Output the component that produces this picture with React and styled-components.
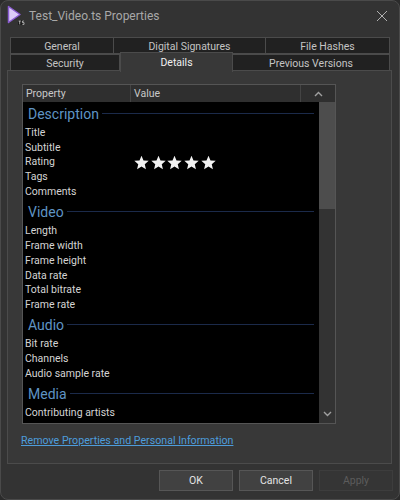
import React from 'react';
import styled, { createGlobalStyle } from 'styled-components';

const Global = createGlobalStyle`
  html, body {
    margin: 0;
    padding: 0;
    background: #2b2b2b;
  }
  * {
    box-sizing: border-box;
  }
`;

const Dialog = styled.div`
  width: 400px;
  height: 500px;
  background: #333333;
  border-radius: 8px;
  border: 1px solid #4a4a4a;
  display: flex;
  flex-direction: column;
  overflow: hidden;
  font-family: Roboto, "Noto Sans", sans-serif;
  color: #e6e6e6;
`;

const TitleBar = styled.div`
  height: 36px;
  flex: none;
  display: flex;
  align-items: center;
  padding: 0 11px 7px 6px;
`;

const Title = styled.div`
  flex: 1;
  margin-left: 4px;
  font-size: 12px;
  color: #a8a8a8;
`;

const Tabs = styled.div`
  margin: 0 9px;
  display: flex;
  flex-direction: column;
  flex: none;
`;

const TabRow = styled.div`
  display: flex;
  height: 17px;
  align-items: stretch;
`;

const Tab = styled.div`
  width: ${(p) => p.$width}px;
  display: flex;
  align-items: center;
  justify-content: center;
  padding-top: 1px;
  font-size: 10.5px;
  background: ${(p) => (p.$active ? '#383838' : '#212121')};
  color: ${(p) => (p.$active ? '#f0f0f0' : '#c4c4c4')};
  border: 1px solid #4b4b4b;
  border-left-width: ${(p) => (p.$first || p.$active ? 1 : 0)}px;
  ${(p) =>
    p.$active &&
    `
    margin-top: -2px;
    height: 20px;
    border-bottom: 0;
    padding-bottom: 1px;
    position: relative;
    z-index: 1;
  `}
`;

const Panel = styled.div`
  margin: -1px 7px 0 6px;
  height: 394px;
  flex: none;
  background: #383838;
  border: 1px solid #4b4b4b;
  padding: 13px 0 0 14px;
`;

const List = styled.div`
  width: 314px;
  height: 340px;
  border: 1px solid #555555;
  display: flex;
  flex-direction: column;
`;

const Header = styled.div`
  height: 17px;
  flex: none;
  display: flex;
  background: #2f2f2f;
  font-size: 10.5px;
  color: #c8c8c8;
`;

const HeaderCell = styled.div`
  width: ${(p) => p.$width}px;
  display: flex;
  align-items: center;
  justify-content: ${(p) => (p.$center ? 'center' : 'flex-start')};
  padding-left: ${(p) => (p.$center ? 0 : 3)}px;
  border-right: ${(p) => (p.$last ? 0 : 1)}px solid #444444;
`;

const ListBody = styled.div`
  flex: 1;
  min-height: 0;
  display: flex;
`;

const Rows = styled.div`
  width: 296px;
  background: #000000;
  overflow: hidden;
  padding: 2px 5px 0 2px;
`;

const SectionHead = styled.div`
  height: 21px;
  padding-bottom: 2px;
  display: flex;
  align-items: center;
  gap: 3px;
  margin-left: 3px;
  font-size: 14px;
  color: #5f94c4;
  &::after {
    content: '';
    flex: 1;
    height: 1px;
    background: #1b2a4a;
  }
`;

const Section = styled.div`
  padding-bottom: 3.3px;
`;

const Row = styled.div`
  height: 14.8px;
  display: flex;
  align-items: center;
  font-size: 10.5px;
  color: #d4d4d4;
`;

const RowName = styled.div`
  width: 109px;
`;

const Stars = styled.div`
  display: flex;
  gap: 1.7px;
`;

const ScrollBar = styled.div`
  width: 16px;
  background: #333333;
  display: flex;
  flex-direction: column;
`;

const Thumb = styled.div`
  height: 107px;
  background: #4d4d4d;
`;

const DownArrow = styled.div`
  margin-top: auto;
  height: 18px;
  display: flex;
  align-items: center;
  justify-content: center;
`;

const RemoveLink = styled.a`
  display: inline-block;
  margin-top: 10px;
  margin-left: -1px;
  font-size: 10.65px;
  color: #4d9ddc;
  text-decoration: underline;
`;

const Footer = styled.div`
  flex: 1;
  display: flex;
  justify-content: flex-end;
  gap: 6px;
  padding: 6px 6px 0 0;
`;

const Button = styled.div`
  width: 74px;
  height: 21px;
  display: flex;
  align-items: center;
  justify-content: center;
  font-size: 10.5px;
  background: ${(p) => (p.$disabled ? '#353535' : '#414141')};
  color: ${(p) => (p.$disabled ? '#5c5c5c' : '#e4e4e4')};
  border: 1px solid ${(p) => (p.$disabled ? '#3d3d3d' : '#565656')};
`;

const Star = () => (
  <svg width="15" height="15" viewBox="0 0 24 24">
    <path fill="#f2f2f2" d="M12 1l3.2 7.6 8.3.7-6.3 5.4 1.9 8.1L12 18.5l-7.1 4.3 1.9-8.1L.5 9.3l8.3-.7z" />
  </svg>
);

const Chevron = ({ up }) => (
  <svg width="9" height="6" viewBox="0 0 9 6">
    <path d={up ? 'M1 5l3.5-3.5L8 5' : 'M1 1l3.5 3.5L8 1'} fill="none" stroke="#a0a0a0" strokeWidth="1.4" />
  </svg>
);

const sections = [
  { name: 'Description', rows: ['Title', 'Subtitle', 'Rating', 'Tags', 'Comments'] },
  { name: 'Video', rows: ['Length', 'Frame width', 'Frame height', 'Data rate', 'Total bitrate', 'Frame rate'] },
  { name: 'Audio', rows: ['Bit rate', 'Channels', 'Audio sample rate'] },
  { name: 'Media', rows: ['Contributing artists', 'Year'] },
];

export default function App() {
  return (
    <>
      <Global />
      <Dialog>
        <TitleBar>
          <svg width="18" height="22" viewBox="0 0 18 22">
            <path d="M1.5 1.5L13 9.5 1.5 17.5z" fill="#dccdf7" stroke="#8a5cd0" strokeWidth="1.5" strokeLinejoin="round" />
            <rect x="11" y="15" width="6" height="5" fill="#1c1c1c" />
            <path d="M11.5 16h2.4M12.7 16v3.4M17 16h-1.6v1.6H17v1.8h-1.6" fill="none" stroke="#e0e0e0" strokeWidth=".7" />
          </svg>
          <Title>Test_Video.ts Properties</Title>
          <svg width="12" height="12" viewBox="0 0 12 12">
            <path d="M1 1l10 10M11 1L1 11" stroke="#b0b0b0" strokeWidth="1" />
          </svg>
        </TitleBar>
        <Tabs>
          <TabRow>
            <Tab $first $width={104}>General</Tab>
            <Tab $width={152}>Digital Signatures</Tab>
            <Tab $width={124}>File Hashes</Tab>
          </TabRow>
          <TabRow>
            <Tab $first $width={110}>Security</Tab>
            <Tab $active $width={113}>Details</Tab>
            <Tab $width={157}>Previous Versions</Tab>
          </TabRow>
        </Tabs>
        <Panel>
          <List>
            <Header>
              <HeaderCell $width={108}>Property</HeaderCell>
              <HeaderCell $width={170}>Value</HeaderCell>
              <HeaderCell $last $center $width={34}><Chevron up /></HeaderCell>
            </Header>
            <ListBody>
              <Rows>
                {sections.map((s) => (
                  <Section key={s.name}>
                    <SectionHead>{s.name}</SectionHead>
                    {s.rows.map((r) => (
                      <Row key={r}>
                        <RowName>{r}</RowName>
                        {r === 'Rating' && (
                          <Stars>
                            {[0, 1, 2, 3, 4].map((i) => <Star key={i} />)}
                          </Stars>
                        )}
                      </Row>
                    ))}
                  </Section>
                ))}
              </Rows>
              <ScrollBar>
                <Thumb />
                <DownArrow><Chevron /></DownArrow>
              </ScrollBar>
            </ListBody>
          </List>
          <RemoveLink>Remove Properties and Personal Information</RemoveLink>
        </Panel>
        <Footer>
          <Button>OK</Button>
          <Button>Cancel</Button>
          <Button $disabled>Apply</Button>
        </Footer>
      </Dialog>
    </>
  );
}
